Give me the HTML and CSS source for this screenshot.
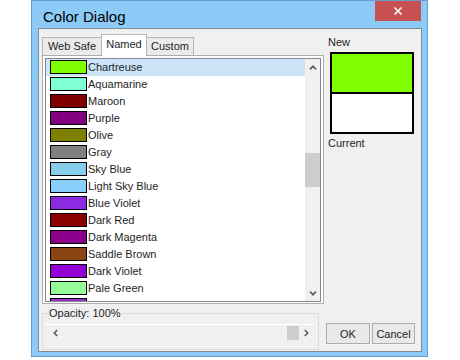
FILE: index.html
```html
<!DOCTYPE html>
<html lang="en">
<head>
    <meta charset="UTF-8">
    <title>Color Dialog</title>
    <link rel="stylesheet" href="styles.css">
</head>
<body>
    <div class="window">
        <div class="titlebar">
            <span class="title">Color Dialog</span>
            <div class="close">
                <svg width="10" height="10" viewBox="0 0 10 10"><path d="M1.5 1.5 L8.5 8.5 M8.5 1.5 L1.5 8.5" fill="none" stroke="#fff" stroke-width="1.6"/></svg>
            </div>
        </div>
        <div class="client">
            <div class="top">
                <div class="left">
                    <div class="tabs">
                        <div class="tab tab-websafe">Web Safe</div>
                        <div class="tab tab-named active">Named</div>
                        <div class="tab tab-custom">Custom</div>
                    </div>
                    <div class="panel">
                        <div class="listbox">
                            <ul class="colors">
                                <li class="selected"><span class="swatch" style="background:#7fff00"></span>Chartreuse</li>
                                <li><span class="swatch" style="background:#7fffd4"></span>Aquamarine</li>
                                <li><span class="swatch" style="background:#800000"></span>Maroon</li>
                                <li><span class="swatch" style="background:#800080"></span>Purple</li>
                                <li><span class="swatch" style="background:#808000"></span>Olive</li>
                                <li><span class="swatch" style="background:#808080"></span>Gray</li>
                                <li><span class="swatch" style="background:#87ceeb"></span>Sky Blue</li>
                                <li><span class="swatch" style="background:#87cefa"></span>Light Sky Blue</li>
                                <li><span class="swatch" style="background:#8a2be2"></span>Blue Violet</li>
                                <li><span class="swatch" style="background:#8b0000"></span>Dark Red</li>
                                <li><span class="swatch" style="background:#8b008b"></span>Dark Magenta</li>
                                <li><span class="swatch" style="background:#8b4513"></span>Saddle Brown</li>
                                <li><span class="swatch" style="background:#9400d3"></span>Dark Violet</li>
                                <li><span class="swatch" style="background:#98fb98"></span>Pale Green</li>
                                <li><span class="swatch" style="background:#9932cc"></span></li>
                            </ul>
                            <div class="vscroll">
                                <div class="arrow">
                                    <svg width="8" height="5" viewBox="0 0 8 5"><path d="M1 4.3 L4 1.3 L7 4.3" fill="none" stroke="#606060" stroke-width="1.7"/></svg>
                                </div>
                                <div class="track"><div class="vthumb"></div></div>
                                <div class="arrow">
                                    <svg width="8" height="5" viewBox="0 0 8 5"><path d="M1 0.7 L4 3.7 L7 0.7" fill="none" stroke="#606060" stroke-width="1.7"/></svg>
                                </div>
                            </div>
                        </div>
                    </div>
                </div>
                <div class="preview">
                    <div class="label">New</div>
                    <div class="preview-box">
                        <div class="preview-new"></div>
                        <div class="preview-current"></div>
                    </div>
                    <div class="label label-current">Current</div>
                </div>
            </div>
            <div class="bottom">
                <fieldset class="opacity">
                    <legend>Opacity: 100%</legend>
                    <div class="hscroll">
                        <svg class="hleft" width="5" height="8" viewBox="0 0 5 8"><path d="M4.2 1 L1.3 4 L4.2 7" fill="none" stroke="#606060" stroke-width="1.7"/></svg>
                        <div class="htrack"></div>
                        <div class="hthumb"></div>
                        <svg class="hright" width="5" height="8" viewBox="0 0 5 8"><path d="M0.8 1 L3.7 4 L0.8 7" fill="none" stroke="#606060" stroke-width="1.7"/></svg>
                    </div>
                </fieldset>
                <div class="buttons">
                    <button class="btn btn-ok">OK</button>
                    <button class="btn btn-cancel">Cancel</button>
                </div>
            </div>
        </div>
    </div>
</body>
</html>
```

FILE: styles.css
```css
body {
    margin: 0;
    background: #fff;
    font-family: 'Liberation Sans', Arial, sans-serif;
    font-size: 11px;
    color: #1e1e1e;
}
.window {
    margin-left: 31px;
    width: 397px;
    height: 357px;
    box-sizing: border-box;
    border: 1px solid #6b9ccc;
    background: #8ccbf8;
}
.titlebar {
    display: flex;
    justify-content: space-between;
    height: 27px;
}
.title {
    padding: 7px 0 0 11px;
    font-size: 15px;
    line-height: 17px;
    color: #000;
}
.close {
    width: 46px;
    height: 20px;
    margin-right: 6px;
    background: #c75050;
    display: flex;
    align-items: center;
    justify-content: center;
}
.client {
    margin-left: 6px;
    width: 384px;
    height: 324px;
    box-sizing: border-box;
    border: 1px solid #7f8c98;
    background: #f0f0f0;
    padding: 5px 0 0 3px;
}
.top {
    display: flex;
    height: 270px;
}
.left {
    width: 282px;
    display: flex;
    flex-direction: column;
}
.tabs {
    display: flex;
    align-items: flex-end;
    height: 21px;
    position: relative;
    z-index: 1;
}
.tab {
    box-sizing: border-box;
    height: 18px;
    border: 1px solid #b5b5b5;
    border-bottom: none;
    border-right: none;
    background: #ebebeb;
    line-height: 17px;
    text-align: center;
}
.tab-websafe { width: 59px; }
.tab-named { width: 46px; }
.tab-custom { width: 47px; border-right: 1px solid #b5b5b5; }
.tab.active {
    height: 22px;
    margin-bottom: -1px;
    background: #fff;
    border-right: 1px solid #b5b5b5;
    line-height: 19px;
}
.tab.active + .tab {
    border-left: none;
}
.panel {
    height: 249px;
    box-sizing: border-box;
    border: 1px solid #adadad;
    background: #fff;
    padding: 2px 2px 1px;
}
.listbox {
    height: 100%;
    box-sizing: border-box;
    border: 1px solid #828790;
    display: flex;
}
.colors {
    flex: 1;
    margin: 0;
    padding: 0;
    list-style: none;
    overflow: hidden;
}
.colors li {
    display: flex;
    align-items: flex-start;
    height: 17px;
    padding: 1px 0 0 4px;
    box-sizing: border-box;
    line-height: 14px;
    white-space: nowrap;
}
.colors li.selected {
    background: #cce4f7;
}
.swatch {
    width: 37px;
    height: 14px;
    box-sizing: border-box;
    border: 1px solid #000;
    margin-right: 1px;
    flex: none;
}
.vscroll {
    width: 15px;
    background: #f0f0f0;
    display: flex;
    flex-direction: column;
}
.arrow {
    height: 16px;
    display: flex;
    align-items: center;
    justify-content: center;
}
.track {
    flex: 1;
}
.vthumb {
    margin-top: 78px;
    height: 34px;
    background: #cdcdcd;
}
.preview {
    margin-left: 4px;
    display: flex;
    flex-direction: column;
    align-items: flex-start;
}
.label {
    line-height: 16px;
}
.preview-box {
    margin: 2px 0 0 2px;
    width: 84px;
    height: 82px;
    box-sizing: border-box;
    border: 2px solid #000;
    background: #000;
}
.preview-new {
    height: 38px;
    background: #7fff00;
}
.preview-current {
    height: 38px;
    margin-top: 2px;
    background: #fff;
}
.label-current {
    margin-top: 1px;
}
.bottom {
    display: flex;
    align-items: flex-end;
    margin-top: 3px;
    height: 43px;
}
.opacity {
    margin: 0;
    width: 277px;
    height: 43px;
    box-sizing: border-box;
    border: 1px solid #dcdcdc;
    padding: 0 3px 2px 0;
    min-width: 0;
}
.opacity legend {
    margin-left: 5px;
    padding: 0 1px;
    line-height: 13px;
}
.hscroll {
    margin-top: 4px;
    border-top: 1px solid #fff;
    height: 16px;
    display: flex;
    align-items: center;
    padding-right: 6px;
}
.hleft {
    margin-left: 10px;
}
.htrack {
    flex: 1;
}
.hthumb {
    width: 12px;
    height: 14px;
    background: #cdcdcd;
    margin-right: 5px;
}
.buttons {
    display: flex;
    gap: 2px;
    margin: 0 0 6px 7px;
}
.btn {
    height: 21px;
    box-sizing: border-box;
    border: 1px solid #adadad;
    background: #e9e9e9;
    font-family: 'Liberation Sans', Arial, sans-serif;
    font-size: 11px;
    color: #1e1e1e;
    padding: 0;
}
.btn-ok { width: 44px; }
.btn-cancel { width: 43px; }
```
